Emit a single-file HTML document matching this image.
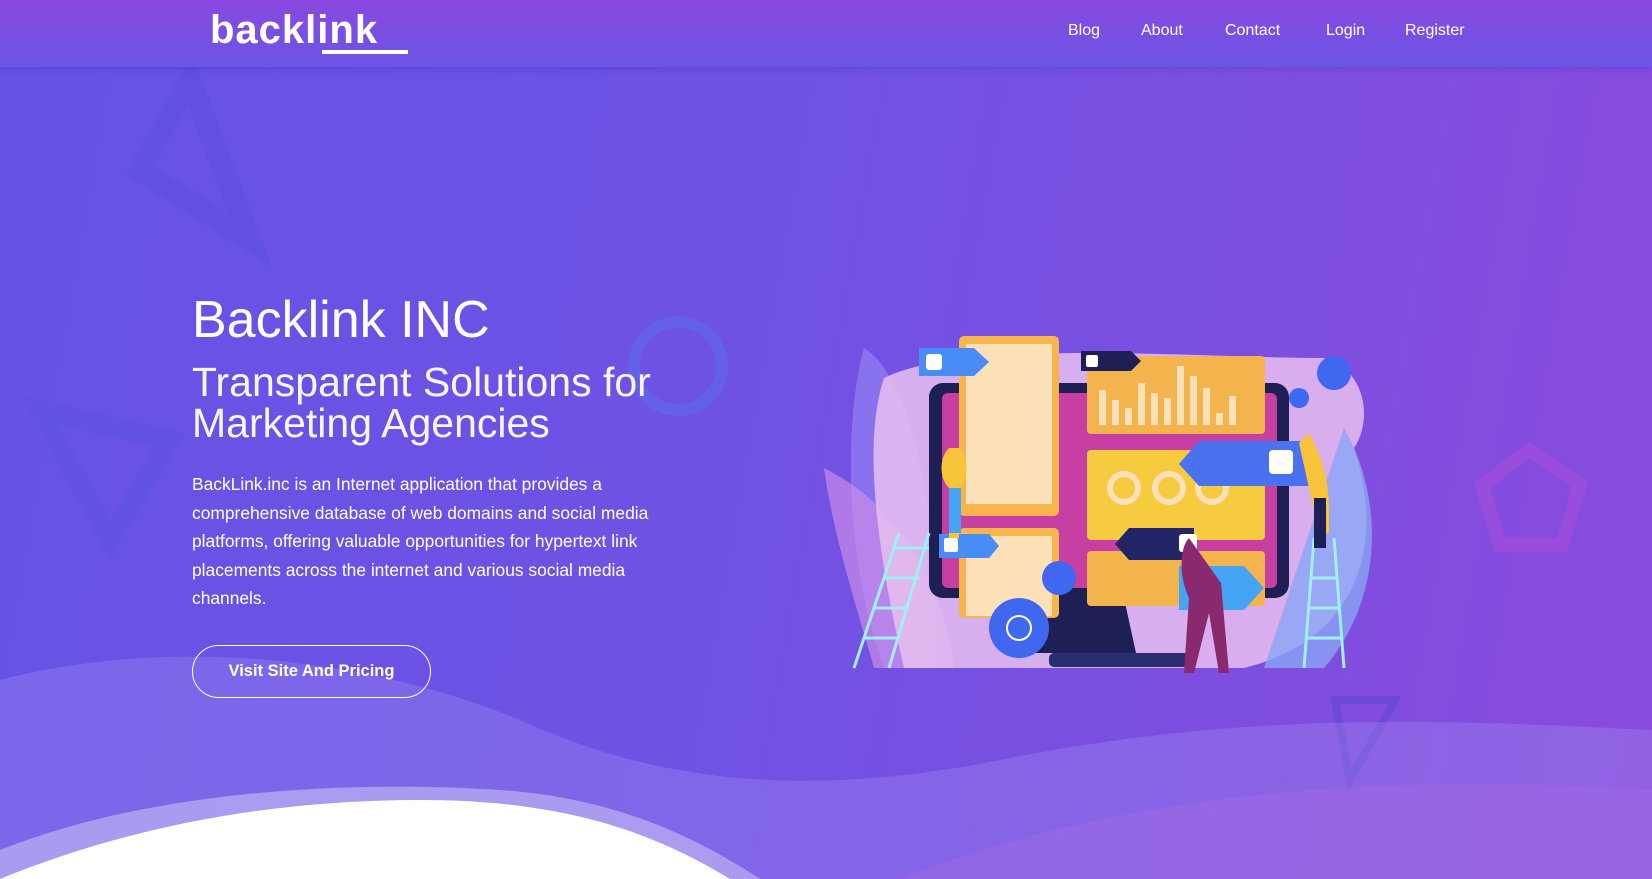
<!DOCTYPE html>
<html><head><meta charset="utf-8"><style>
*{margin:0;padding:0;box-sizing:border-box}
body{width:1652px;height:879px;overflow:hidden;font-family:"Liberation Sans",sans-serif;color:#fff;
background:linear-gradient(100deg,#6553e6 0%,#6f52e4 45%,#8a4bdc 100%);position:relative}
.nav{position:absolute;top:0;left:0;width:1652px;height:67px;background:linear-gradient(180deg,#8a48df,#6a55e6);box-shadow:0 2px 6px rgba(60,30,150,.25)}
.logo{position:absolute;left:210px;top:8px;font-size:40px;font-weight:bold;letter-spacing:1px}
.menu a{position:absolute;top:22px;font-size:16px;color:#fff;text-decoration:none}
h1{position:absolute;left:192px;top:290px;font-size:52px;font-weight:normal}
h2{position:absolute;left:192px;top:362px;font-size:41px;font-weight:300;line-height:41px;opacity:.95}
p{position:absolute;left:192px;top:470px;width:535px;font-size:17.4px;line-height:28.6px}
.btn{position:absolute;left:192px;top:645px;width:239px;height:53px;border:1.5px solid #fff;border-radius:27px;text-align:center;line-height:50px;font-size:16.5px;font-weight:bold}
</style></head><body>
<svg width="1652" height="879" style="position:absolute;left:0;top:0">
<polygon points="190,80 250,240 140,170" fill="none" stroke="rgba(90,80,220,.45)" stroke-width="22"/>
<polygon points="40,410 170,440 110,540" fill="none" stroke="rgba(90,80,220,.35)" stroke-width="20"/>
<circle cx="678" cy="366" r="44" fill="none" stroke="rgba(90,110,240,.5)" stroke-width="12"/>
<polygon points="1530,450 1580,485 1562,545 1500,545 1482,485" fill="none" stroke="rgba(200,80,220,.3)" stroke-width="14"/>
<polygon points="1335,700 1395,700 1350,780" fill="none" stroke="rgba(70,70,200,.35)" stroke-width="8"/>
<path d="M0,680 C150,640 350,650 520,720 C650,780 800,800 1000,760 C1250,710 1450,720 1652,730 L1652,879 L0,879Z" fill="rgba(160,140,240,.35)"/>
<path d="M0,850 C150,790 350,780 500,790 C620,798 700,840 760,879 L0,879Z" fill="rgba(255,255,255,.35)"/>
<path d="M0,879 C120,830 260,800 420,800 C560,800 650,830 730,879Z" fill="#fff"/>
<path d="M900,879 C1100,800 1350,770 1652,790 L1652,879Z" fill="rgba(170,110,230,.35)"/>
<g transform="translate(824,338)">
<path d="M40,10 C90,40 120,200 110,330 L60,330 C20,220 20,80 40,10Z" fill="#8f7af0" opacity=".8"/>
<path d="M0,130 C80,170 120,250 130,330 L50,330 C30,260 10,200 0,130Z" fill="#c98be8" opacity=".7"/>
<path d="M60,40 C140,0 380,20 500,20 C540,30 550,80 530,110 C560,200 540,300 420,330 L80,330 C50,200 40,100 60,40Z" fill="#e8c0f0" opacity=".85"/>
<path d="M520,90 C560,160 560,260 500,330 L440,330Z" fill="#8aa5f5" opacity=".8"/>
<rect x="105" y="45" width="360" height="215" rx="14" fill="#1e1f55"/>
<rect x="118" y="55" width="335" height="195" rx="6" fill="#c83fa3"/>
<path d="M210,260 h90 l12,55 h-114z" fill="#1e1f55"/>
<rect x="225" y="315" width="140" height="14" rx="5" fill="#2a2d6e"/>
<rect x="135" y="-2" width="100" height="180" rx="5" fill="#f6b64c"/><rect x="142" y="6" width="86" height="160" fill="#fbe0b8"/>
<rect x="135" y="190" width="100" height="90" rx="5" fill="#f6b64c"/><rect x="142" y="198" width="86" height="80" fill="#fbe0b8"/>
<rect x="263" y="18" width="178" height="78" rx="4" fill="#f4b44d"/>
<g fill="#fbe0b8"><rect x="275" y="52" width="7" height="35"/><rect x="288" y="62" width="7" height="25"/><rect x="301" y="70" width="7" height="17"/><rect x="314" y="45" width="7" height="42"/><rect x="327" y="55" width="7" height="32"/><rect x="340" y="60" width="7" height="27"/><rect x="353" y="28" width="7" height="59"/><rect x="366" y="38" width="7" height="49"/><rect x="379" y="50" width="7" height="37"/><rect x="392" y="75" width="7" height="12"/><rect x="405" y="58" width="7" height="29"/></g>
<rect x="263" y="112" width="178" height="90" rx="4" fill="#f7cb3f"/>
<g fill="none" stroke="#fbe0b8" stroke-width="6"><circle cx="300" cy="150" r="14"/><circle cx="345" cy="150" r="14"/><circle cx="388" cy="150" r="14"/></g>
<rect x="263" y="213" width="178" height="55" rx="4" fill="#f4b44d"/>
<path d="M95,10 h55 l15,14 l-15,14 h-55z" fill="#4a8cf5"/><rect x="102" y="16" width="16" height="16" rx="3" fill="#fff"/>
<path d="M257,13 h50 l10,10 l-10,10 h-50z" fill="#1e1f55"/><rect x="262" y="17" width="12" height="12" rx="2" fill="#fff"/>
<path d="M375,103 h110 v45 h-110 l-20,-22z" fill="#4a72f0"/><rect x="445" y="112" width="24" height="24" rx="4" fill="#fff"/>
<path d="M305,190 h65 v32 h-65 l-14,-16z" fill="#232566"/><rect x="355" y="196" width="18" height="18" rx="3" fill="#fff"/>
<path d="M115,196 h50 l10,12 l-10,12 h-50z" fill="#4a8cf5"/><rect x="120" y="200" width="14" height="14" rx="2" fill="#fff"/>
<path d="M355,228 h65 l20,22 l-20,22 h-65z" fill="#45a4f5"/><rect x="365" y="236" width="20" height="20" rx="3" fill="#fff"/>
<circle cx="195" cy="290" r="30" fill="#3f67f0"/><circle cx="195" cy="290" r="12" fill="none" stroke="#fff" stroke-width="2"/>
<circle cx="235" cy="240" r="17" fill="#3f67f0"/><circle cx="510" cy="35" r="17" fill="#3f67f0"/><circle cx="475" cy="60" r="10" fill="#3f67f0"/>
<g stroke="#9ff0f5" stroke-width="3" fill="none"><path d="M30,330 L75,195 M65,330 L105,195 M40,300 h35 M50,270 h35 M60,240 h35 M70,210 h35"/><path d="M480,330 L490,200 M520,330 L510,200 M482,300 h35 M485,270 h30 M488,240 h25"/></g>
<path d="M125,110 c-10,10 -10,30 0,40 v50 h10 v-50 c10,-10 10,-30 0,-40z" fill="#f7c43a"/><rect x="125" y="150" width="12" height="45" fill="#45a4f5"/>
<path d="M485,95 c10,20 20,40 20,80 v20 h-10 l-20,-90z" fill="#f7c43a"/><rect x="490" y="160" width="12" height="50" fill="#1e1f55"/>
<path d="M365,200 c-10,10 -10,40 0,60 l-5,75 h10 l15,-60 l10,60 h10 l-8,-90z" fill="#8a2a6e"/>
</g>
</svg>
<div class="nav">
<div class="logo">backlink<span style="position:absolute;left:112px;top:42px;width:86px;height:4px;background:#fff"></span></div>
<div class="menu"><a style="left:1068px">Blog</a><a style="left:1141px">About</a><a style="left:1225px">Contact</a><a style="left:1326px">Login</a><a style="left:1405px">Register</a></div>
</div>
<h1>Backlink INC</h1>
<h2>Transparent Solutions for<br>Marketing Agencies</h2>
<p>BackLink.inc is an Internet application that provides a<br>comprehensive database of web domains and social media<br>platforms, offering valuable opportunities for hypertext link<br>placements across the internet and various social media<br>channels.</p>
<div class="btn">Visit Site And Pricing</div>
</body></html>
